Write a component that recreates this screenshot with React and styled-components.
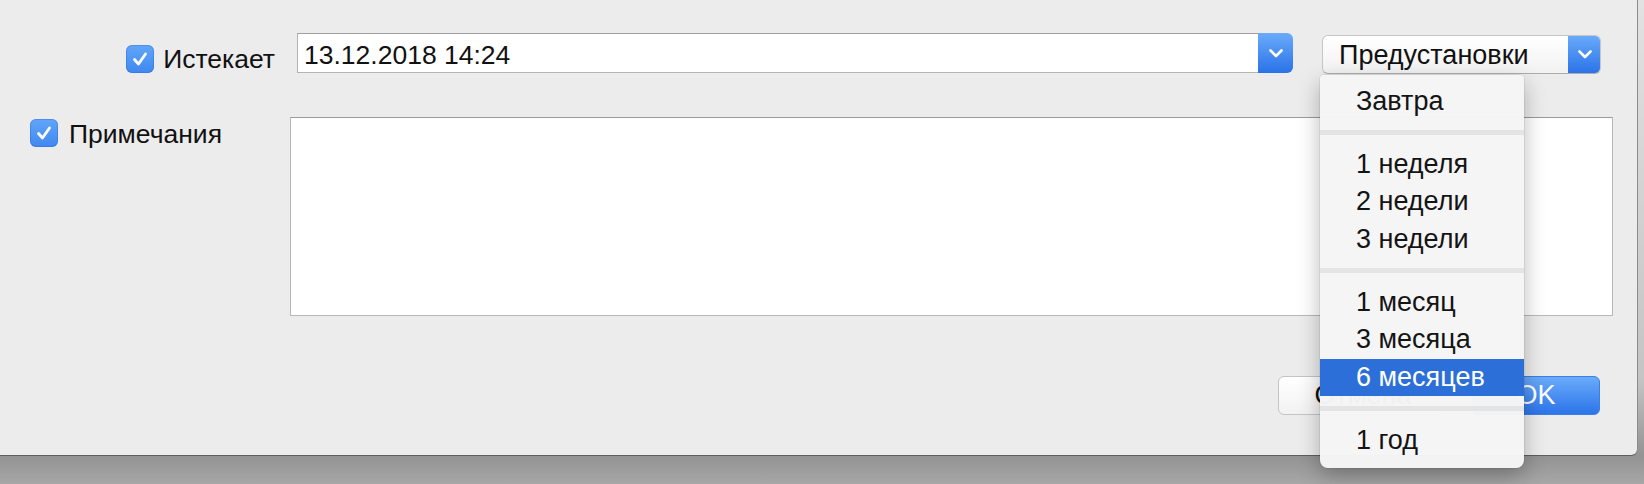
import React from "react";
import styled, { createGlobalStyle } from "styled-components";

const GlobalStyle = createGlobalStyle`
  html, body {
    margin: 0;
    padding: 0;
  }
  body {
    font-family: "Liberation Sans", Arial, sans-serif;
    color: #111;
  }
`;

const presets = [
  ["Завтра"],
  ["1 неделя", "2 недели", "3 недели"],
  ["1 месяц", "3 месяца", "6 месяцев"],
  ["1 год"],
];

function Chevron() {
  return (
    <svg width="14" height="9" viewBox="0 0 14 9">
      <polyline
        points="1.5,1.5 7,7 12.5,1.5"
        fill="none"
        stroke="#fff"
        strokeWidth="2.6"
        strokeLinecap="round"
        strokeLinejoin="round"
      />
    </svg>
  );
}

function CheckBox() {
  return (
    <Box>
      <svg width="28" height="28" viewBox="0 0 28 28">
        <polyline
          points="8.5,14.5 12.5,19 19.5,9"
          fill="none"
          stroke="#fff"
          strokeWidth="2.8"
          strokeLinecap="round"
          strokeLinejoin="round"
        />
      </svg>
    </Box>
  );
}

function App() {
  return (
    <>
      <GlobalStyle />
      <Desktop>
        <Sheet>
          <ExpiresRow>
            <LabelArea $align="end" $width={297} $pad="0 22px 0 0" $top={12}>
              <CheckBox />
              <Label>Истекает</Label>
            </LabelArea>
            <DateField>
              <DateInput>13.12.2018 14:24</DateInput>
              <Stepper>
                <Chevron />
              </Stepper>
            </DateField>
            <PresetWrap>
              <PresetButton>
                <PresetText>Предустановки</PresetText>
                <PresetArrow>
                  <Chevron />
                </PresetArrow>
              </PresetButton>
              <Menu>
                {presets.map((group, gi) => (
                  <React.Fragment key={gi}>
                    {gi > 0 && (
                      <Separator>
                        <SepLine />
                      </Separator>
                    )}
                    {group.map((item) => (
                      <MenuItem key={item} $active={item === "6 месяцев"}>
                        {item}
                      </MenuItem>
                    ))}
                  </React.Fragment>
                ))}
              </Menu>
            </PresetWrap>
          </ExpiresRow>

          <NotesRow>
            <LabelArea $align="start" $width={290} $pad="0 0 0 30px" $top={0}>
              <CheckBox />
              <Label $gap={11} $shift={3}>
                Примечания
              </Label>
            </LabelArea>
            <Notes />
          </NotesRow>

          <ButtonRow>
            <Button $width={170}>Отмена</Button>
            <Button $width={128} $primary>
              OK
            </Button>
          </ButtonRow>
        </Sheet>
      </Desktop>
    </>
  );
}

const Desktop = styled.div`
  width: 1644px;
  height: 484px;
  overflow: hidden;
  background: linear-gradient(
    to bottom,
    #e2e2e2 0px,
    #c4c4c4 380px,
    #939393 456px,
    #a7a7a7 484px
  );
`;

const Sheet = styled.div`
  box-sizing: border-box;
  width: 1638px;
  height: 456px;
  background: #ececec;
  border-right: 1px solid #8c8c8c;
  border-bottom: 1px solid #5e5e5e;
  border-bottom-right-radius: 7px;
  display: flex;
  flex-direction: column;
  padding-top: 33px;
`;

const ExpiresRow = styled.div`
  display: flex;
  align-items: flex-start;
  height: 40px;
`;

const NotesRow = styled.div`
  display: flex;
  align-items: flex-start;
  margin-top: 44px;
`;

const LabelArea = styled.div`
  box-sizing: border-box;
  flex: none;
  width: ${(p) => p.$width}px;
  padding: ${(p) => p.$pad};
  margin-top: ${(p) => p.$top}px;
  display: flex;
  align-items: center;
  justify-content: ${(p) => (p.$align === "end" ? "flex-end" : "flex-start")};
`;

const Box = styled.div`
  width: 28px;
  height: 28px;
  border-radius: 6px;
  background: linear-gradient(to bottom, #62a5f9, #3f88f0);
  box-shadow: inset 0 0 0 1px rgba(40, 100, 210, 0.35);
  display: flex;
`;

const Label = styled.span`
  margin-left: ${(p) => p.$gap || 9}px;
  padding-top: ${(p) => p.$shift || 0}px;
  font-size: 26.5px;
  line-height: 28px;
  color: #111;
`;

const DateField = styled.div`
  display: flex;
  width: 996px;
  height: 40px;
`;

const DateInput = styled.div`
  box-sizing: border-box;
  flex: 1;
  height: 40px;
  background: #fff;
  border: 1px solid #b4b4b4;
  border-top-color: #9e9e9e;
  border-right: none;
  padding: 4px 0 0 6px;
  font-size: 26.5px;
  line-height: 34px;
  color: #111;
`;

const Stepper = styled.div`
  width: 35px;
  height: 40px;
  border-radius: 0 6px 6px 0;
  background: linear-gradient(to bottom, #6aabfa, #2a72e8);
  display: flex;
  align-items: center;
  justify-content: center;
  padding-top: 1px;
  box-sizing: border-box;
`;

const PresetWrap = styled.div`
  position: relative;
  margin: 2px 0 0 29px;
  width: 279px;
  height: 39px;
`;

const PresetButton = styled.div`
  box-sizing: border-box;
  display: flex;
  height: 39px;
  border-radius: 6px;
  border: 1px solid #c6c6c6;
  border-bottom-color: #adadad;
  background: linear-gradient(to bottom, #ffffff, #f2f2f2);
  overflow: hidden;
`;

const PresetText = styled.div`
  flex: 1;
  padding: 1px 0 0 16px;
  font-size: 27px;
  line-height: 36px;
  color: #111;
`;

const PresetArrow = styled.div`
  width: 33px;
  margin: -1px -1px -1px 0;
  background: linear-gradient(to bottom, #6aabfa, #2a72e8);
  display: flex;
  align-items: center;
  justify-content: center;
`;

const Menu = styled.div`
  position: absolute;
  top: 40px;
  left: -2px;
  width: 204px;
  box-sizing: border-box;
  padding: 7.5px 0 9px;
  background: rgba(245, 245, 245, 0.98);
  border-radius: 4px 4px 8px 8px;
  box-shadow: 0 0 0 1px rgba(0, 0, 0, 0.06), 0 8px 22px rgba(0, 0, 0, 0.28);
  z-index: 10;
`;

const MenuItem = styled.div`
  height: 37.5px;
  padding-left: 36px;
  font-size: 27px;
  line-height: 37.5px;
  white-space: nowrap;
  color: ${(p) => (p.$active ? "#fff" : "#141414")};
  background: ${(p) => (p.$active ? "#2d6fd8" : "transparent")};
`;

const Separator = styled.div`
  height: 25.5px;
  display: flex;
  align-items: center;
`;

const SepLine = styled.div`
  flex: 1;
  height: 5px;
  background: #e4e4e4;
`;

const Notes = styled.div`
  box-sizing: border-box;
  width: 1323px;
  height: 199px;
  background: #fff;
  border: 1px solid #b8b8b8;
  border-top-color: #9a9a9a;
`;

const ButtonRow = styled.div`
  display: flex;
  justify-content: flex-end;
  gap: 24px;
  margin-top: 60px;
  padding-right: 37px;
`;

const Button = styled.div`
  box-sizing: border-box;
  width: ${(p) => p.$width}px;
  height: 39px;
  border-radius: 6px;
  text-align: center;
  font-size: 27px;
  line-height: 37px;
  color: ${(p) => (p.$primary ? "#fff" : "#111")};
  border: 1px solid ${(p) => (p.$primary ? "#3a7fe8" : "#c4c4c4")};
  background: ${(p) =>
    p.$primary
      ? "linear-gradient(to bottom, #6aabfa, #2c74ea)"
      : "linear-gradient(to bottom, #ffffff, #f2f2f2)"};
`;

export default App;
